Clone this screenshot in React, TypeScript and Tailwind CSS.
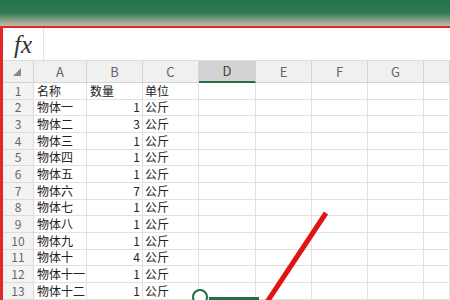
import React from "react";

const cols = ["A", "B", "C", "D", "E", "F", "G", ""];

const rows: [string, string, string][] = [
  ["名称", "数量", "单位"],
  ["物体一", "1", "公斤"],
  ["物体二", "3", "公斤"],
  ["物体三", "1", "公斤"],
  ["物体四", "1", "公斤"],
  ["物体五", "1", "公斤"],
  ["物体六", "7", "公斤"],
  ["物体七", "1", "公斤"],
  ["物体八", "1", "公斤"],
  ["物体九", "1", "公斤"],
  ["物体十", "4", "公斤"],
  ["物体十一", "1", "公斤"],
  ["物体十二", "1", "公斤"],
];

const font = {
  fontFamily: '"Noto Sans CJK SC", "Liberation Sans", sans-serif',
};

const App = () => {
  return (
    <div
      className="relative h-[300px] w-[450px] overflow-hidden bg-white"
      style={font}
    >
      {/* title bar */}
      <div className="h-[26px] w-full bg-linear-to-b from-[#24724a] via-[#2d7b50] via-50% to-[#c2bcae]" />

      {/* red annotation frame around sheet */}
      <div className="border-l-[3px] border-t-2 border-[#e32626]">
        {/* formula bar */}
        <div className="flex h-[33px] border-b border-[#dcdcdc]">
          <div className="flex w-[41px] items-center justify-center border-r border-[#e2e2e2]">
            <span
              className="text-[25px] italic leading-none text-[#333]"
              style={{ fontFamily: '"Liberation Serif", serif' }}
            >
              fx
            </span>
          </div>
          <div className="flex-1" />
        </div>

        {/* grid */}
        <div className="grid grid-cols-[31px_53px_56px_56px_57px_56px_56px_56px_1fr] text-[12px]">
          {/* header row */}
          <div className="relative h-[22px] border-b border-r border-[#d4d4d4] bg-[#f0f0f0]">
            <div className="absolute bottom-[6px] right-[12px] h-0 w-0 border-b-[8px] border-l-[8px] border-b-[#888] border-l-transparent" />
          </div>
          {cols.map((c, i) => (
            <div
              key={i}
              className={
                c === "D"
                  ? "flex h-[22px] items-center justify-center border-b-2 border-r border-b-[#217346] border-r-[#d4d4d4] bg-[#d2d2d2] text-[13px] text-[#444]"
                  : "flex h-[22px] items-center justify-center border-b border-r border-[#d4d4d4] bg-[#f0f0f0] text-[13px] text-[#666]"
              }
            >
              {c}
            </div>
          ))}

          {rows.map((r, i) => (
            <React.Fragment key={i}>
              <div className="flex h-[16.67px] items-center justify-center border-b border-r border-[#dcdcdc] bg-[#f3f3f3] text-[#666]">
                {i + 1}
              </div>
              <div className="flex h-[16.67px] items-center border-b border-r border-[#e1e1e1] pl-[3px] text-[#222]">
                {r[0]}
              </div>
              <div
                className={
                  i === 0
                    ? "flex h-[16.67px] items-center border-b border-r border-[#e1e1e1] pl-[3px] text-[#222]"
                    : "flex h-[16.67px] items-center justify-end border-b border-r border-[#e1e1e1] pr-[2px] text-[#222]"
                }
              >
                {r[1]}
              </div>
              <div className="flex h-[16.67px] items-center border-b border-r border-[#e1e1e1] pl-[2px] text-[#222]">
                {r[2]}
              </div>
              {[0, 1, 2, 3, 4].map((k) => (
                <div
                  key={k}
                  className="h-[16.67px] border-b border-r border-[#e1e1e1]"
                />
              ))}
            </React.Fragment>
          ))}
        </div>
      </div>

      {/* annotations */}
      <div className="absolute left-[192px] top-[289px] h-[16px] w-[16px] rounded-full border-2 border-[#1f6b4a] bg-white" />
      <div className="absolute left-[209px] top-[297px] h-[3px] w-[50px] bg-[#2a6a50]" />
      <svg className="absolute left-0 top-0" width="450" height="300">
        <line
          x1="326"
          y1="213"
          x2="267"
          y2="302"
          stroke="#e01414"
          strokeWidth="5"
        />
      </svg>
    </div>
  );
};

export default App;
